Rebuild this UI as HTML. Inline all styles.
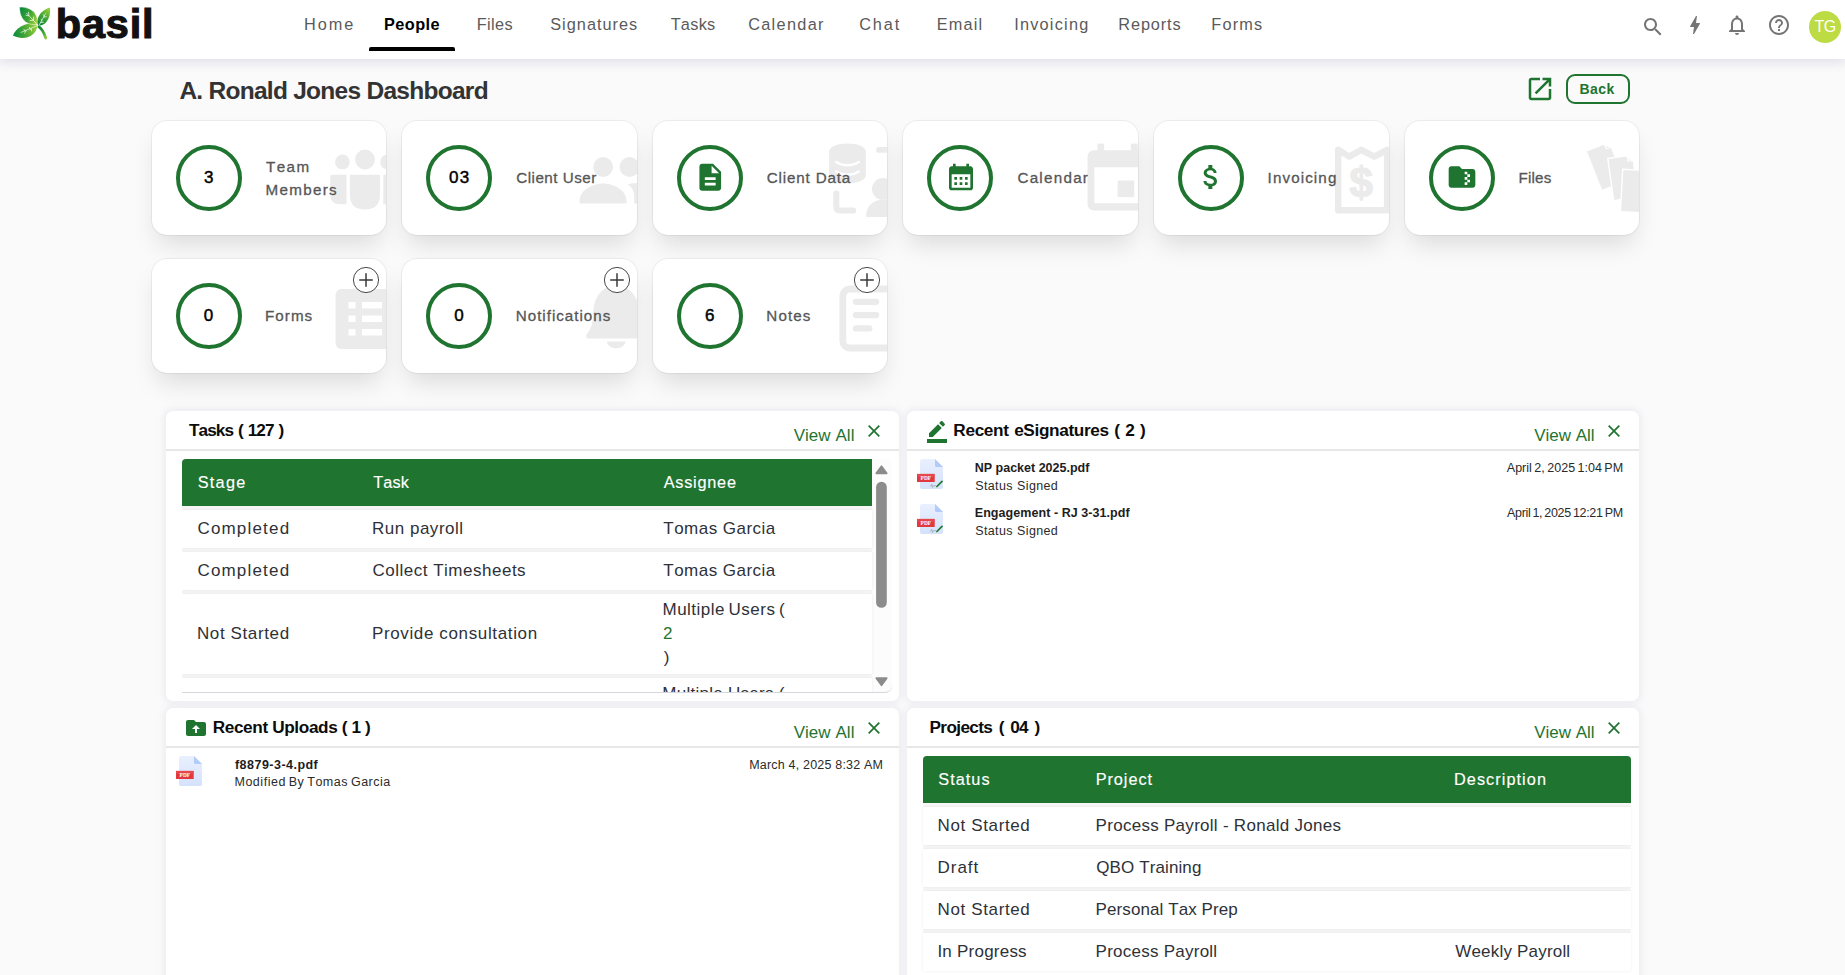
<!DOCTYPE html>
<html lang="en"><head><meta charset="utf-8"><title>A. Ronald Jones Dashboard</title>
<style>
*{box-sizing:border-box;margin:0;padding:0}
html,body{width:1845px;height:975px;overflow:hidden}
body{background:#fafafa;font-family:"Liberation Sans",sans-serif;font-kerning:none;position:relative;color:#333}
.t{position:absolute;white-space:nowrap;display:block}
.abs{position:absolute}
.m{-webkit-text-stroke:0.3px currentColor}
.mw{-webkit-text-stroke:0.15px currentColor}
header{position:absolute;left:0;top:0;width:1845px;height:59px;background:#fff;box-shadow:0 2px 11px 1px rgba(110,110,165,.2)}
.card{position:absolute;height:114px;background:#fff;border-radius:15px;box-shadow:0 0 0 1px rgba(0,0,0,.05),0 14px 24px -5px rgba(0,0,0,.126);overflow:hidden}
.ring{position:absolute;left:24px;top:24px;width:66px;height:66px;border-radius:50%;border:4.2px solid #1f742f}
.ghost{position:absolute;fill:#ebebeb}
.panel{position:absolute;background:#fff;border-radius:7px;box-shadow:0 0 7px 2px rgba(205,205,225,.3);overflow:hidden}
.hr{position:absolute;height:2px;background:#e7e7e7}
.thead{position:absolute;background:#1f742f;border-radius:4px 4px 0 0}
.row{position:absolute;background:#fff;box-shadow:0 0 3px rgba(0,0,0,.07)}
</style></head>
<body>
<header>
<svg class="abs" style="left:10px;top:4px" width="44" height="38" viewBox="10 4 44 38">
<defs>
<linearGradient id="g1" x1="19.500" y1="11" x2="38" y2="19" gradientUnits="userSpaceOnUse"><stop offset="0" stop-color="#0a8a3c"/><stop offset=".55" stop-color="#3fa535"/><stop offset="1" stop-color="#a3d13c"/></linearGradient>
<linearGradient id="g2" x1="38" y1="26" x2="50" y2="8" gradientUnits="userSpaceOnUse"><stop offset="0" stop-color="#0b7f3a"/><stop offset=".5" stop-color="#3fa535"/><stop offset="1" stop-color="#a6d43a"/></linearGradient>
<linearGradient id="g3" x1="13" y1="34" x2="38" y2="28" gradientUnits="userSpaceOnUse"><stop offset="0" stop-color="#0a8a3c"/><stop offset=".5" stop-color="#4aaa35"/><stop offset="1" stop-color="#a3d13c"/></linearGradient>
<linearGradient id="g4" x1="39" y1="27" x2="46" y2="39" gradientUnits="userSpaceOnUse"><stop offset="0" stop-color="#12863a"/><stop offset=".6" stop-color="#4dab35"/><stop offset="1" stop-color="#97d03c"/></linearGradient>
</defs>
<path fill="url(#g3)" d="M12.900 35.500C15 30.400 19 26.700 24 24.900C28.500 23.300 33.600 23.500 37.700 25.500C37.100 29.500 34.600 33.700 30.600 36.100C25.600 38.800 18.500 38.500 12.900 35.500z"/>
<path fill="url(#g1)" stroke="#fff" stroke-width=".500" d="M19.500 7.100C25.500 6.800 31.200 8.800 34.400 12.600C37 15.700 37.900 20 37.500 24.500C33.500 25 28.800 24.300 25.600 22C21.200 18.800 19.600 12.800 19.500 7.100z"/>
<path fill="url(#g2)" d="M50 7.600c.7 5.200-.6 10.600-3.400 14.200-2 2.500-5.200 4-8.600 4.200-.9-3.400-.7-7 .9-10 2.100-4 6.300-7.100 11.100-8.400z"/>
<path fill="none" stroke="url(#g4)" stroke-width="2.700" stroke-linecap="round" d="M39 26.900C42 29 44.200 33 45.700 38.200"/>
<g stroke="#fff" stroke-width=".700" fill="none" stroke-linecap="round" opacity=".95">
<path d="M26.600 13.300L37.400 24.600M28.400 12.300l.6 2.800M26 15.400l3 .4M33.600 17l-.3 3.300M30 20.600l3.300-.3"/>
<path d="M45.600 13.600L38.800 25.600M43.400 14.800l.9 1.800M46.300 16.600l-2.300.6M41.200 19.200l.8 2M43.400 22.300l-2.700.3"/>
<path d="M21 32.400l16.400-6.800M24 29.300l1 2M24.600 33.300l1.600-2.400M29.400 27.400l1 2.200M31.600 31l-.4-2.600"/>
</g>
</svg>
<span class="t" style="left:55.76px;top:-1.00px;font-size:41.5px;line-height:50px;letter-spacing:0.801px;color:#111;font-weight:700;-webkit-text-stroke:1.1px #111;">basil</span>
<nav>
<span class="t" style="left:303.96px;top:14.00px;font-size:16.3px;line-height:20px;letter-spacing:1.994px;color:#5a5a5a;">Home</span>
<span class="t" style="left:476.66px;top:14.00px;font-size:16.3px;line-height:20px;letter-spacing:0.378px;color:#5a5a5a;">Files</span>
<span class="t" style="left:550.26px;top:14.00px;font-size:16.3px;line-height:20px;letter-spacing:1.011px;color:#5a5a5a;">Signatures</span>
<span class="t" style="left:670.63px;top:14.00px;font-size:16.3px;line-height:20px;letter-spacing:0.296px;color:#5a5a5a;">Tasks</span>
<span class="t" style="left:748.17px;top:14.00px;font-size:16.3px;line-height:20px;letter-spacing:1.322px;color:#5a5a5a;">Calendar</span>
<span class="t" style="left:859.17px;top:14.00px;font-size:16.3px;line-height:20px;letter-spacing:1.939px;color:#5a5a5a;">Chat</span>
<span class="t" style="left:936.66px;top:14.00px;font-size:16.3px;line-height:20px;letter-spacing:1.167px;color:#5a5a5a;">Email</span>
<span class="t" style="left:1014.20px;top:14.00px;font-size:16.3px;line-height:20px;letter-spacing:1.228px;color:#5a5a5a;">Invoicing</span>
<span class="t" style="left:1118.36px;top:14.00px;font-size:16.3px;line-height:20px;letter-spacing:0.859px;color:#5a5a5a;">Reports</span>
<span class="t" style="left:1211.36px;top:14.00px;font-size:16.3px;line-height:20px;letter-spacing:1.187px;color:#5a5a5a;">Forms</span>
<span class="t" style="left:384.11px;top:14.00px;font-size:16.3px;line-height:20px;letter-spacing:0.401px;color:#000;font-weight:700;">People</span>
</nav>
<div class="abs" style="left:369px;top:47px;width:86px;height:4px;background:#000;border-radius:2px 2px 0 0"></div>
<svg class="abs" style="left:1640.80px;top:15.00px" width="24" height="24" viewBox="0 0 24 24"><path fill="#757575" d="M15.5 14h-.79l-.28-.27C15.41 12.59 16 11.11 16 9.5 16 5.91 13.09 3 9.5 3S3 5.91 3 9.5 5.91 16 9.5 16c1.61 0 3.09-.59 4.23-1.57l.27.28v.79l5 4.99L20.49 19l-4.99-5zm-6 0C7.01 14 5 11.99 5 9.5S7.01 5 9.5 5 14 7.01 14 9.5 11.99 14 9.5 14z"/></svg>
<svg class="abs" style="left:1682.90px;top:12.90px" width="24" height="24" viewBox="0 0 24 24"><path fill="#757575" d="M11 21h-1l1-7H7.5c-.58 0-.57-.32-.38-.66.19-.34.05-.08.07-.12C8.48 10.94 10.42 7.54 13 3h1l-1 7h3.5c.49 0 .56.33.47.51l-.07.15C12.96 17.55 11 21 11 21z"/></svg>
<svg class="abs" style="left:1724.90px;top:12.70px" width="24" height="24" viewBox="0 0 24 24"><path fill="#757575" d="M12 22c1.1 0 2-.9 2-2h-4c0 1.1.9 2 2 2zm6-6v-5c0-3.07-1.63-5.64-4.5-6.32V4c0-.83-.67-1.5-1.5-1.5s-1.5.67-1.5 1.5v.68C7.64 5.36 6 7.92 6 11v5l-2 2v1h16v-1l-2-2zm-2 1H8v-6c0-2.48 1.51-4.5 4-4.5s4 2.02 4 4.5v6z"/></svg>
<svg class="abs" style="left:1767.00px;top:12.90px" width="24" height="24" viewBox="0 0 24 24"><path fill="#757575" d="M11 18h2v-2h-2v2zm1-16C6.48 2 2 6.48 2 12s4.48 10 10 10 10-4.48 10-10S17.52 2 12 2zm0 18c-4.41 0-8-3.59-8-8s3.59-8 8-8 8 3.59 8 8-3.59 8-8 8zm0-14c-2.21 0-4 1.79-4 4h2c0-1.1.9-2 2-2s2 .9 2 2c0 2-3 1.75-3 5h2c0-2.25 3-2.5 3-5 0-2.21-1.79-4-4-4z"/></svg>
<div class="abs" style="left:1809px;top:11px;width:32px;height:32px;border-radius:50%;background:#bddb43"></div>
<span class="t" style="left:1814.44px;top:17.00px;font-size:16px;line-height:19px;letter-spacing:-0.564px;color:#fff;">TG</span>
</header>
<main>
<span class="t" style="left:179.39px;top:76.00px;font-size:24.5px;line-height:29px;letter-spacing:-0.729px;color:#333;font-weight:700;">A. Ronald Jones Dashboard</span>
<svg class="abs" style="left:1525.00px;top:73.80px" width="30" height="30" viewBox="0 0 24 24"><path fill="#1f742f" d="M19 19H5V5h7V3H5c-1.11 0-2 .9-2 2v14c0 1.1.89 2 2 2h14c1.1 0 2-.9 2-2v-7h-2v7zM14 3v2h3.59l-9.83 9.83 1.41 1.41L19 6.41V10h2V3h-7z"/></svg>
<div class="abs" style="left:1566px;top:74px;width:64px;height:30px;border:2px solid #1f742f;border-radius:9px"></div>
<span class="t" style="left:1579.46px;top:81.00px;font-size:14px;line-height:17px;letter-spacing:0.418px;color:#1f742f;font-weight:700;">Back</span>
<div class="card" style="left:152px;top:121px;width:234px"><div class="abs" style="left:0.0px;top:-0.5px"><svg class="abs" style="left:170px;top:19.200px" width="70" height="85" viewBox="170 20 70 85" fill="#ebebeb">
<circle cx="190.400" cy="41.900" r="7.400"/><circle cx="213" cy="39.500" r="9.900"/><circle cx="235.600" cy="41.900" r="7.400"/>
<path d="M178.200 56.700q0-2 2-2h14.300v29.500h-6.300q-10 0-10-10z"/>
<path d="M197.900 54.700h30.100v19.700q0 15-15.050 15t-15.050-15z"/>
<path d="M231.300 54.700h14.300q2 0 2 2v17.500q0 10-10 10h-6.300z"/>
</svg></div><div class="ring"></div></div>
<span class="t" style="left:203.92px;top:168.00px;font-size:17px;line-height:20px;letter-spacing:0.000px;color:#000;-webkit-text-stroke:.45px #000;">3</span>
<span class="t m" style="left:265.96px;top:158.00px;font-size:15.2px;line-height:18px;letter-spacing:1.430px;color:#565656;">Team</span>
<span class="t m" style="left:265.55px;top:181.00px;font-size:15.2px;line-height:18px;letter-spacing:1.292px;color:#565656;">Members</span>
<div class="card" style="left:402px;top:121px;width:235px"><div class="abs" style="left:0.5px;top:-0.5px"><svg class="abs" style="left:170px;top:30px" width="70" height="60" viewBox="170 30 70 60" fill="#ebebeb">
<circle cx="200.100" cy="46" r="9.900"/><circle cx="226.500" cy="46" r="9.900"/>
<path d="M176.600 80c0-12 15-17.500 23.500-17.500s23.400 5.500 23.400 17.500v2.600h-46.900z"/>
<path d="M224.800 63.200c5.200 3.600 6.400 8.500 6.400 12.300v7.100h7v-20c-4.600-.7-9.600-.5-13.400.6z"/>
</svg></div><div class="ring"></div></div>
<span class="t" style="left:449.04px;top:168.00px;font-size:17px;line-height:20px;letter-spacing:1.202px;color:#000;-webkit-text-stroke:.45px #000;">03</span>
<span class="t m" style="left:516.23px;top:169.00px;font-size:15.2px;line-height:18px;letter-spacing:0.495px;color:#565656;">Client User</span>
<div class="card" style="left:653px;top:121px;width:234px"><div class="abs" style="left:0.0px;top:-0.5px"><svg class="abs" style="left:170px;top:15px" width="70" height="95" viewBox="170 15 70 95" fill="#ebebeb">
<path d="M176.100 31c0-5 8-8.400 18.400-8.400s18.400 3.400 18.400 8.400v23c0 5-8 8.300-18.400 8.300s-18.400-3.300-18.400-8.300z"/>
<path d="M183.300 41c3 2.200 6.800 3.200 11.200 3.200s8.200-1 11.200-3.200M183.300 50.500c3 2.200 6.800 3.200 11.200 3.200s8.200-1 11.200-3.200" fill="none" stroke="#fff" stroke-width="2.600" stroke-linecap="round"/>
<path d="M183.300 72.500v13.500q0 3.400 3.400 3.400h13.500" fill="none" stroke="#ebebeb" stroke-width="6" stroke-linecap="round"/>
<path d="M226 28.900h12" fill="none" stroke="#ebebeb" stroke-width="5.800" stroke-linecap="round"/>
<circle cx="230" cy="68" r="11"/>
<path d="M213.100 96.100c0-11.500 7-17.300 17-17.300h6v17.300z"/>
</svg><svg class="abs" style="left:40.75px;top:40.15px" width="32.5" height="32.5" viewBox="0 0 24 24"><path fill="#1f742f" d="M14 2H6c-1.1 0-1.99.9-1.99 2L4 20c0 1.1.89 2 1.99 2H18c1.1 0 2-.9 2-2V8l-6-6zm2 16H8v-2h8v2zm0-4H8v-2h8v2zm-3-5V3.5L18.500 9H13z"/></svg></div><div class="ring"></div></div>
<span class="t m" style="left:766.83px;top:169.00px;font-size:15.2px;line-height:18px;letter-spacing:0.828px;color:#565656;">Client Data</span>
<div class="card" style="left:903px;top:121px;width:235px"><div class="abs" style="left:0.5px;top:-0.5px"><svg class="abs" style="left:175px;top:15px" width="65" height="95" viewBox="175 15 65 95" fill="#ebebeb">
<rect x="193.400" y="22.600" width="6.800" height="12"/><rect x="226.900" y="22.600" width="6.800" height="12"/>
<path d="M183.500 35.800c0-3.500 2.500-6.500 6.500-6.500h50v60.100h-50c-4 0-6.500-3-6.500-6.500z"/>
<path d="M190.300 46.300h50v35.900h-50z" fill="#fff"/>
<rect x="213.600" y="59.500" width="16.600" height="16.600"/>
</svg><svg class="abs" style="left:41.0px;top:40.4px" width="32" height="32" viewBox="0 0 24 24"><path fill="#1f742f" d="M19 4h-1V2h-2v2H8V2H6v2H5c-1.110 0-1.990.9-1.990 2L3 20c0 1.100.890 2 2 2h14c1.100 0 2-.9 2-2V6c0-1.100-.9-2-2-2zm0 16H5V10h14v10zM9 14H7v-2h2v2zm4 0h-2v-2h2v2zm4 0h-2v-2h2v2zm-8 4H7v-2h2v2zm4 0h-2v-2h2v2zm4 0h-2v-2h2v2z"/></svg></div><div class="ring"></div></div>
<span class="t m" style="left:1017.43px;top:169.00px;font-size:15.2px;line-height:18px;letter-spacing:1.263px;color:#565656;">Calendar</span>
<div class="card" style="left:1154px;top:121px;width:235px"><div class="abs" style="left:0.0px;top:-0.5px"><svg class="abs" style="left:175px;top:20px" width="65" height="90" viewBox="175 20 65 90">
<path d="M184.200 89.200V28.800L195.200 35.600l12.200-6.800L220.300 35.600l12.800-6.800v60.400z" fill="none" stroke="#ebebeb" stroke-width="6.400" stroke-linejoin="round"/>
<text x="207.300" y="76.200" font-family="Liberation Sans,sans-serif" font-weight="700" font-size="42" text-anchor="middle" fill="#ebebeb" stroke="#ebebeb" stroke-width="1.300" stroke-linejoin="round">$</text>
<path d="M233 67.300h8" stroke="#ebebeb" stroke-width="4.400"/>
</svg><svg class="abs" style="left:41.0px;top:40.4px" width="32" height="32" viewBox="0 0 24 24"><path fill="#1f742f" d="M11.800 10.900c-2.270-.590-3-1.200-3-2.150 0-1.090 1.010-1.850 2.700-1.850 1.780 0 2.440.850 2.500 2.100h2.210c-.070-1.720-1.120-3.300-3.210-3.810V3h-3v2.160c-1.940.420-3.500 1.680-3.500 3.610 0 2.310 1.910 3.460 4.700 4.130 2.500.6 3 1.480 3 2.410 0 .690-.490 1.790-2.700 1.790-2.060 0-2.870-.920-2.980-2.100h-2.200c.120 2.190 1.760 3.420 3.680 3.830V21h3v-2.150c1.950-.370 3.500-1.500 3.500-3.550 0-2.840-2.430-3.810-4.700-4.400z"/></svg></div><div class="ring"></div></div>
<span class="t m" style="left:1267.60px;top:169.00px;font-size:15.2px;line-height:18px;letter-spacing:1.099px;color:#565656;">Invoicing</span>
<div class="card" style="left:1405px;top:121px;width:234px"><div class="abs" style="left:-0.5px;top:-0.5px"><svg class="abs" style="left:170px;top:15px" width="70" height="95" viewBox="170 15 70 95" fill="#ebebeb">
<g transform="translate(181.100 30) rotate(-21.500)"><path d="M0 0h19l6 6v36.500h-25z" stroke="#fff" stroke-width="1.400"/><path d="M19 0l6 6h-6z" fill="#fff"/><path d="M20.300 2.800l2.400 2.400h-2.400z"/></g>
<g transform="translate(202.800 37.500) rotate(-8)"><path d="M0 0h19l6 6v36.500h-25z" stroke="#fff" stroke-width="1.400"/><path d="M19 0l6 6h-6z" fill="#fff"/><path d="M20.300 2.800l2.400 2.400h-2.400z"/></g>
<g transform="translate(217.700 48.300) rotate(3)"><path d="M0 0h19l6 6v36.500h-25z" stroke="#fff" stroke-width="1.400"/><path d="M19 0l6 6h-6z" fill="#fff"/><path d="M20.300 2.800l2.400 2.400h-2.400z"/></g>
</svg><svg class="abs" style="left:41.0px;top:40.4px" width="32" height="32" viewBox="0 0 24 24"><path fill="#1f742f" d="M20 6h-8l-2-2H4c-1.100 0-2 .9-2 2v12c0 1.100.9 2 2 2h16c1.100 0 2-.9 2-2V8c0-1.100-.9-2-2-2zm-2 6h-2v2h2v2h-2v2h-2v-2h2v-2h-2v-2h2v-2h-2V8h2v2h2v2z"/></svg></div><div class="ring"></div></div>
<span class="t m" style="left:1518.55px;top:169.00px;font-size:15.2px;line-height:18px;letter-spacing:0.176px;color:#565656;">Files</span>
<div class="card" style="left:152px;top:259px;width:234px"><div class="abs" style="left:0.0px;top:-0.5px"><svg class="abs" style="left:175px;top:25px" width="65" height="70" viewBox="175 25 65 70" fill="#ebebeb">
<rect x="183.500" y="30" width="70" height="60" rx="6"/>
<g fill="#fff"><rect x="196.500" y="43" width="7" height="6.500"/><rect x="210" y="43" width="20" height="6.500"/>
<rect x="196.500" y="56.500" width="7" height="6.500"/><rect x="210" y="56.500" width="20" height="6.500"/>
<rect x="196.500" y="70" width="7" height="6.500"/><rect x="210" y="70" width="20" height="6.500"/></g>
</svg><svg class="abs" style="left:200px;top:7.500px" width="28" height="28" viewBox="0 0 28 28">
<circle cx="14" cy="14" r="12.600" fill="#fff" stroke="#4a4a4a" stroke-width="1"/>
<path d="M14 7.200v13.600M7.200 14h13.600" stroke="#3a3a3a" stroke-width="1.500"/></svg></div><div class="ring"></div></div>
<span class="t" style="left:203.87px;top:306.00px;font-size:17px;line-height:20px;letter-spacing:0.000px;color:#000;-webkit-text-stroke:.45px #000;">0</span>
<span class="t m" style="left:265.05px;top:307.00px;font-size:15.2px;line-height:18px;letter-spacing:1.034px;color:#565656;">Forms</span>
<div class="card" style="left:402px;top:259px;width:235px"><div class="abs" style="left:0.5px;top:-0.5px"><svg class="abs" style="left:175px;top:20px" width="65" height="80" viewBox="175 20 65 80" fill="#ebebeb">
<path d="M190.300 54c0-16 10-27.700 23-27.700s23 11.700 23 27.700c0 10 3 15 6 19.500v5.900h-58c-1.500-1.500-1.500-3.500 0-5 3.500-4.500 6-10.400 6-20.400z"/>
<path d="M203.700 82.500h19c-1 4-4.500 6.800-9.500 6.800s-8.500-2.800-9.500-6.800z"/>
</svg><svg class="abs" style="left:200px;top:7.500px" width="28" height="28" viewBox="0 0 28 28">
<circle cx="14" cy="14" r="12.600" fill="#fff" stroke="#4a4a4a" stroke-width="1"/>
<path d="M14 7.200v13.600M7.200 14h13.600" stroke="#3a3a3a" stroke-width="1.500"/></svg></div><div class="ring"></div></div>
<span class="t" style="left:454.32px;top:306.00px;font-size:17px;line-height:20px;letter-spacing:0.000px;color:#000;-webkit-text-stroke:.45px #000;">0</span>
<span class="t m" style="left:515.75px;top:307.00px;font-size:15.2px;line-height:18px;letter-spacing:0.984px;color:#565656;">Notifications</span>
<div class="card" style="left:653px;top:259px;width:234px"><div class="abs" style="left:0.0px;top:-0.5px"><svg class="abs" style="left:175px;top:20px" width="65" height="80" viewBox="175 20 65 80">
<rect x="189.800" y="30" width="60" height="59" rx="7" fill="#fff" stroke="#ebebeb" stroke-width="6.800"/>
<g stroke="#ebebeb" stroke-width="6.200" stroke-linecap="round"><path d="M202.900 42.800h20.300M202.900 56.100h20.300M202.900 69.400h13.500"/></g>
</svg><svg class="abs" style="left:200px;top:7.500px" width="28" height="28" viewBox="0 0 28 28">
<circle cx="14" cy="14" r="12.600" fill="#fff" stroke="#4a4a4a" stroke-width="1"/>
<path d="M14 7.200v13.600M7.200 14h13.600" stroke="#3a3a3a" stroke-width="1.500"/></svg></div><div class="ring"></div></div>
<span class="t" style="left:705.01px;top:306.00px;font-size:17px;line-height:20px;letter-spacing:0.000px;color:#000;-webkit-text-stroke:.45px #000;">6</span>
<span class="t m" style="left:766.35px;top:307.00px;font-size:15.2px;line-height:18px;letter-spacing:1.097px;color:#565656;">Notes</span>
<div class="panel" style="left:166px;top:411px;width:733px;height:289.700px"></div>
<span class="t" style="left:188.91px;top:420.00px;font-size:17.2px;line-height:21px;letter-spacing:-0.918px;color:#0c0c0c;word-spacing:1.035px;font-weight:700;">Tasks ( 127 )</span>
<span class="t" style="left:793.63px;top:426.00px;font-size:17px;line-height:20px;letter-spacing:0.050px;color:#1f742f;">View All</span>
<svg class="abs" style="left:866.00px;top:422.90px" width="16" height="16" viewBox="-8 -8 16 16"><path d="M-5.3 -5.3L5.3 5.3M5.3 -5.3L-5.3 5.3" stroke="#1f742f" stroke-width="1.700"/></svg>
<div class="hr" style="left:166px;width:733px;top:449px"></div>
<div class="abs" style="left:182px;top:459px;width:710px;height:233.500px;background:#fcfcfc;border-bottom:1.300px solid #d4d8dd;border-radius:0 6px 7px 0;overflow:hidden"><div class="abs" style="left:0;top:0;width:690px;height:233px;background:#f6f6f6"></div><div class="thead" style="left:0;top:0;width:690px;height:47px;border-radius:4px 0 0 0"></div><div class="row" style="left:0;top:51px;width:690px;height:37.700px"></div><div class="row" style="left:0;top:93px;width:690px;height:37.700px"></div><div class="row" style="left:0;top:135px;width:690px;height:80px"></div><div class="row" style="left:0;top:219.300px;width:690px;height:40px"></div><span class="t" style="left:480.31px;top:225.00px;font-size:17px;line-height:20px;letter-spacing:0.268px;color:#2e3138;">Multiple Users (</span><svg class="abs" style="left:691px;top:0" width="19" height="233" viewBox="0 0 19 233"><path d="M3.300 14.300L8.500 7.200l5.200 7.100z" fill="#8b8b8b" stroke="#8b8b8b" stroke-width="1.700" stroke-linejoin="round"/><rect x="3.100" y="22.800" width="10.700" height="126" rx="5.350" fill="#8c8c8c"/><path d="M3.300 219.200h10.400L8.500 226.300z" fill="#8b8b8b" stroke="#8b8b8b" stroke-width="1.700" stroke-linejoin="round"/></svg></div>
<span class="t mw" style="left:197.66px;top:472.00px;font-size:16.3px;line-height:20px;letter-spacing:1.267px;color:#fff;">Stage</span>
<span class="t mw" style="left:373.23px;top:472.00px;font-size:16.3px;line-height:20px;letter-spacing:0.140px;color:#fff;">Task</span>
<span class="t mw" style="left:663.67px;top:472.00px;font-size:16.3px;line-height:20px;letter-spacing:0.757px;color:#fff;">Assignee</span>
<span class="t" style="left:197.44px;top:519.00px;font-size:17px;line-height:20px;letter-spacing:1.181px;color:#2e3138;">Completed</span>
<span class="t" style="left:371.91px;top:519.00px;font-size:17px;line-height:20px;letter-spacing:0.524px;color:#2e3138;">Run payroll</span>
<span class="t" style="left:663.32px;top:519.00px;font-size:17px;line-height:20px;letter-spacing:0.476px;color:#2e3138;">Tomas Garcia</span>
<span class="t" style="left:197.44px;top:561.00px;font-size:17px;line-height:20px;letter-spacing:1.181px;color:#2e3138;">Completed</span>
<span class="t" style="left:372.44px;top:561.00px;font-size:17px;line-height:20px;letter-spacing:0.508px;color:#2e3138;">Collect Timesheets</span>
<span class="t" style="left:663.32px;top:561.00px;font-size:17px;line-height:20px;letter-spacing:0.476px;color:#2e3138;">Tomas Garcia</span>
<span class="t" style="left:196.91px;top:624.00px;font-size:17px;line-height:20px;letter-spacing:0.620px;color:#2e3138;">Not Started</span>
<span class="t" style="left:371.91px;top:624.00px;font-size:17px;line-height:20px;letter-spacing:0.637px;color:#2e3138;">Provide consultation</span>
<span class="t" style="left:662.51px;top:600.00px;font-size:17px;line-height:20px;letter-spacing:0.478px;color:#2e3138;word-spacing:-1.530px;">Multiple Users (</span>
<span class="t" style="left:663.05px;top:624.00px;font-size:17px;line-height:20px;letter-spacing:0.000px;color:#1f742f;">2</span>
<span class="t" style="left:663.80px;top:648.00px;font-size:17px;line-height:20px;letter-spacing:0.000px;color:#2e3138;">)</span>
<div class="panel" style="left:907px;top:411px;width:732px;height:289.700px"></div>
<svg class="abs" style="left:924.800px;top:418.900px" width="24" height="24" viewBox="0 0 24 24"><path fill="#1f742f" d="M22 24H2v-4h20v4zM13.060 5.190l3.750 3.750L7.750 18H4v-3.750l9.060-9.060zm4.820 2.680-3.750-3.750 1.830-1.830c.390-.390 1.020-.390 1.410 0l2.340 2.340c.390.390.390 1.020 0 1.410l-1.830 1.830z"/></svg>
<span class="t" style="left:953.35px;top:420.00px;font-size:17.2px;line-height:21px;letter-spacing:-0.338px;color:#0c0c0c;word-spacing:1.087px;font-weight:700;">Recent eSignatures ( 2 )</span>
<span class="t" style="left:1534.13px;top:426.00px;font-size:17px;line-height:20px;letter-spacing:0.007px;color:#1f742f;">View All</span>
<svg class="abs" style="left:1606.00px;top:422.90px" width="16" height="16" viewBox="-8 -8 16 16"><path d="M-5.3 -5.3L5.3 5.3M5.3 -5.3L-5.3 5.3" stroke="#1f742f" stroke-width="1.700"/></svg>
<div class="hr" style="left:907px;width:732px;top:449px"></div>
<svg class="abs" style="left:916px;top:458px" width="28" height="32" viewBox="0 0 28 32">
<defs><linearGradient id="pg916458" x1="0" y1="0" x2="0" y2="1"><stop offset="0" stop-color="#e9f0fe"/><stop offset="1" stop-color="#d5e2fb"/></linearGradient></defs>
<path fill="url(#pg916458)" d="M6 .900h13l8 8v20a2 2 0 0 1-2 2H6a2 2 0 0 1-2-2v-26a2 2 0 0 1 2-2z"/>
<path fill="#b1ccfb" d="M19 .900l8 8h-6.500a1.500 1.500 0 0 1-1.500-1.500z"/>
<rect x="1" y="15.900" width="17.700" height="8.100" fill="#e1393e"/><rect x="1" y="15.900" width="17.700" height="3" fill="#ea5357" opacity=".55"/>
<text x="9.850" y="21.800" font-family="Liberation Serif,serif" font-weight="700" font-size="5.400" text-anchor="middle" fill="#fff">PDF</text><path d="M14.200 28.600l1.600-2.300.7 3.100 1.100-1.700h2.300" fill="none" stroke="#8b909a" stroke-width=".6"/><path d="M20.900 28.500L26 23.400" stroke="#1e7a2e" stroke-width="1.700" stroke-linecap="round"/>
</svg>
<span class="t" style="left:974.76px;top:461.00px;font-size:12.5px;line-height:15px;letter-spacing:-0.001px;color:#1d1d1d;font-weight:700;">NP packet 2025.pdf</span>
<span class="t" style="left:975.23px;top:479.00px;font-size:12.5px;line-height:15px;letter-spacing:0.356px;color:#2a2a2a;word-spacing:0.464px;">Status Signed</span>
<span class="t" style="left:1506.78px;top:461.00px;font-size:12.5px;line-height:15px;letter-spacing:0.032px;color:#2a2a2a;word-spacing:-1.125px;">April 2, 2025 1:04 PM</span>
<svg class="abs" style="left:916px;top:503px" width="28" height="32" viewBox="0 0 28 32">
<defs><linearGradient id="pg916503" x1="0" y1="0" x2="0" y2="1"><stop offset="0" stop-color="#e9f0fe"/><stop offset="1" stop-color="#d5e2fb"/></linearGradient></defs>
<path fill="url(#pg916503)" d="M6 .900h13l8 8v20a2 2 0 0 1-2 2H6a2 2 0 0 1-2-2v-26a2 2 0 0 1 2-2z"/>
<path fill="#b1ccfb" d="M19 .900l8 8h-6.500a1.500 1.500 0 0 1-1.500-1.500z"/>
<rect x="1" y="15.900" width="17.700" height="8.100" fill="#e1393e"/><rect x="1" y="15.900" width="17.700" height="3" fill="#ea5357" opacity=".55"/>
<text x="9.850" y="21.800" font-family="Liberation Serif,serif" font-weight="700" font-size="5.400" text-anchor="middle" fill="#fff">PDF</text><path d="M14.200 28.600l1.600-2.300.7 3.100 1.100-1.700h2.300" fill="none" stroke="#8b909a" stroke-width=".6"/><path d="M20.900 28.500L26 23.400" stroke="#1e7a2e" stroke-width="1.700" stroke-linecap="round"/>
</svg>
<span class="t" style="left:974.76px;top:506.00px;font-size:12.5px;line-height:15px;letter-spacing:0.061px;color:#1d1d1d;font-weight:700;">Engagement - RJ 3-31.pdf</span>
<span class="t" style="left:975.23px;top:524.00px;font-size:12.5px;line-height:15px;letter-spacing:0.356px;color:#2a2a2a;word-spacing:0.464px;">Status Signed</span>
<span class="t" style="left:1506.98px;top:506.00px;font-size:12.5px;line-height:15px;letter-spacing:-0.310px;color:#2a2a2a;word-spacing:-1.125px;">April 1, 2025 12:21 PM</span>
<div class="panel" style="left:166px;top:708.300px;width:733px;height:289.700px"></div>
<svg class="abs" style="left:184px;top:716px" width="24" height="24" viewBox="0 0 24 24"><path fill="#1f742f" d="M20 6h-8l-2-2H4c-1.100 0-1.990.9-1.990 2L2 18c0 1.100.9 2 2 2h16c1.100 0 2-.9 2-2V8c0-1.100-.9-2-2-2zm-7 7v4h-2v-4H8l4.010-4L16 13h-3z"/></svg>
<span class="t" style="left:212.65px;top:717.00px;font-size:17.2px;line-height:21px;letter-spacing:-0.358px;color:#0c0c0c;word-spacing:-0.055px;font-weight:700;">Recent Uploads ( 1 )</span>
<span class="t" style="left:793.63px;top:723.00px;font-size:17px;line-height:20px;letter-spacing:0.050px;color:#1f742f;">View All</span>
<svg class="abs" style="left:866.00px;top:720.20px" width="16" height="16" viewBox="-8 -8 16 16"><path d="M-5.3 -5.3L5.3 5.3M5.3 -5.3L-5.3 5.3" stroke="#1f742f" stroke-width="1.700"/></svg>
<div class="hr" style="left:166px;width:733px;top:746px"></div>
<svg class="abs" style="left:175px;top:755.3px" width="28" height="32" viewBox="0 0 28 32">
<defs><linearGradient id="pg175755" x1="0" y1="0" x2="0" y2="1"><stop offset="0" stop-color="#e9f0fe"/><stop offset="1" stop-color="#d5e2fb"/></linearGradient></defs>
<path fill="url(#pg175755)" d="M6 .900h13l8 8v20a2 2 0 0 1-2 2H6a2 2 0 0 1-2-2v-26a2 2 0 0 1 2-2z"/>
<path fill="#b1ccfb" d="M19 .900l8 8h-6.500a1.500 1.500 0 0 1-1.500-1.500z"/>
<rect x="1" y="15.900" width="17.700" height="8.100" fill="#e1393e"/><rect x="1" y="15.900" width="17.700" height="3" fill="#ea5357" opacity=".55"/>
<text x="9.850" y="21.800" font-family="Liberation Serif,serif" font-weight="700" font-size="5.400" text-anchor="middle" fill="#fff">PDF</text>
</svg>
<span class="t" style="left:234.99px;top:758.00px;font-size:12.5px;line-height:15px;letter-spacing:0.474px;color:#1d1d1d;font-weight:700;">f8879-3-4.pdf</span>
<span class="t" style="left:234.47px;top:775.00px;font-size:12.5px;line-height:15px;letter-spacing:0.519px;color:#2a2a2a;word-spacing:-1.125px;">Modified By Tomas Garcia</span>
<span class="t" style="left:749.17px;top:758.00px;font-size:12.5px;line-height:15px;letter-spacing:0.196px;color:#2a2a2a;">March 4, 2025 8:32 AM</span>
<div class="panel" style="left:907px;top:708.300px;width:732px;height:289.700px"></div>
<span class="t" style="left:929.55px;top:717.00px;font-size:17.2px;line-height:21px;letter-spacing:-0.646px;color:#0c0c0c;word-spacing:2.316px;font-weight:700;">Projects ( 04 )</span>
<span class="t" style="left:1534.13px;top:723.00px;font-size:17px;line-height:20px;letter-spacing:0.007px;color:#1f742f;">View All</span>
<svg class="abs" style="left:1606.00px;top:720.20px" width="16" height="16" viewBox="-8 -8 16 16"><path d="M-5.3 -5.3L5.3 5.3M5.3 -5.3L-5.3 5.3" stroke="#1f742f" stroke-width="1.700"/></svg>
<div class="hr" style="left:907px;width:732px;top:746px"></div>
<div class="abs" style="left:923px;top:756px;width:708px;height:215px;background:#f6f6f6"><div class="thead" style="left:0;top:0;width:708px;height:46.700px"></div><div class="row" style="left:0;top:51px;width:708px;height:38px"></div><div class="row" style="left:0;top:93px;width:708px;height:37.700px"></div><div class="row" style="left:0;top:135px;width:708px;height:37.700px"></div><div class="row" style="left:0;top:177px;width:708px;height:37.700px"></div></div>
<span class="t mw" style="left:938.26px;top:769.00px;font-size:16.3px;line-height:20px;letter-spacing:1.024px;color:#fff;">Status</span>
<span class="t mw" style="left:1095.66px;top:769.00px;font-size:16.3px;line-height:20px;letter-spacing:0.954px;color:#fff;">Project</span>
<span class="t mw" style="left:1453.96px;top:769.00px;font-size:16.3px;line-height:20px;letter-spacing:1.056px;color:#fff;">Description</span>
<span class="t" style="left:937.61px;top:816.00px;font-size:17px;line-height:20px;letter-spacing:0.620px;color:#2e3138;">Not Started</span>
<span class="t" style="left:1095.61px;top:816.00px;font-size:17px;line-height:20px;letter-spacing:0.281px;color:#2e3138;">Process Payroll - Ronald Jones</span>
<span class="t" style="left:937.61px;top:858.00px;font-size:17px;line-height:20px;letter-spacing:0.920px;color:#2e3138;">Draft</span>
<span class="t" style="left:1096.19px;top:858.00px;font-size:17px;line-height:20px;letter-spacing:0.116px;color:#2e3138;">QBO Training</span>
<span class="t" style="left:937.61px;top:900.00px;font-size:17px;line-height:20px;letter-spacing:0.620px;color:#2e3138;">Not Started</span>
<span class="t" style="left:1095.61px;top:900.00px;font-size:17px;line-height:20px;letter-spacing:0.082px;color:#2e3138;">Personal Tax Prep</span>
<span class="t" style="left:937.43px;top:942.00px;font-size:17px;line-height:20px;letter-spacing:0.226px;color:#2e3138;">In Progress</span>
<span class="t" style="left:1095.61px;top:942.00px;font-size:17px;line-height:20px;letter-spacing:0.245px;color:#2e3138;">Process Payroll</span>
<span class="t" style="left:1455.23px;top:942.00px;font-size:17px;line-height:20px;letter-spacing:0.192px;color:#2e3138;">Weekly Payroll</span>
</main>
</body></html>
